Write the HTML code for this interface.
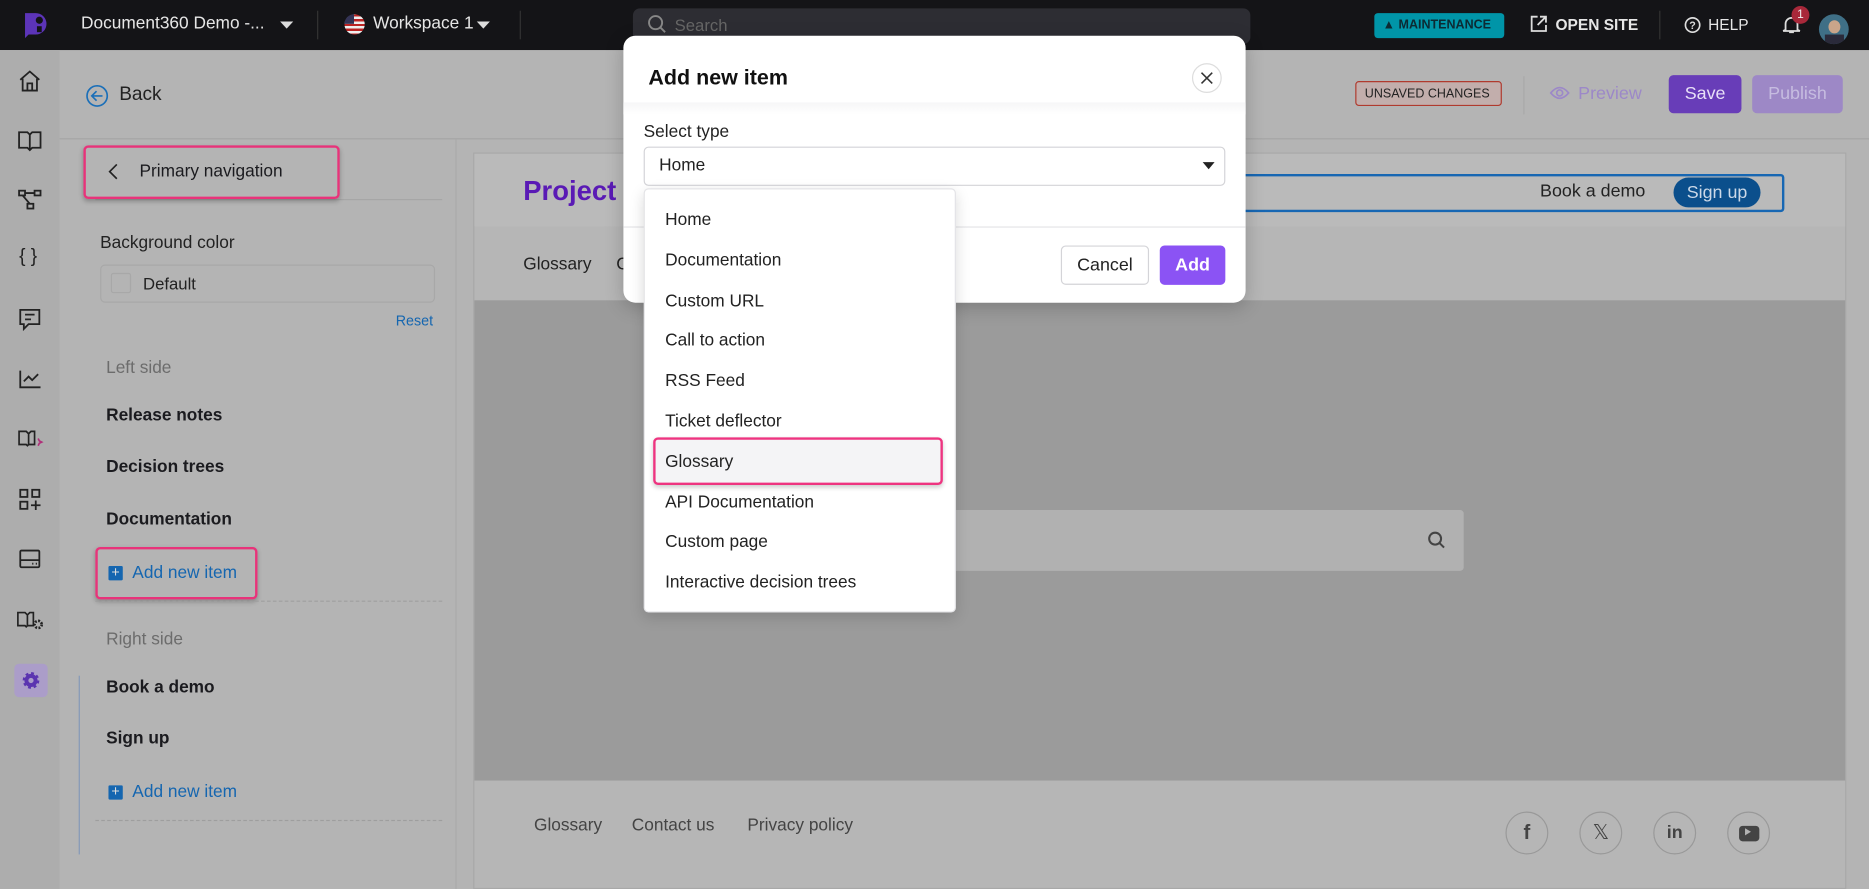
<!DOCTYPE html>
<html><head><meta charset="utf-8">
<style>
*{box-sizing:border-box;margin:0;padding:0}
html,body{width:1869px;height:889px;overflow:hidden;background:#b4b4b4}
#s{position:absolute;left:0;top:0;width:1568px;height:746px;transform:scale(1.19196,1.19169);transform-origin:0 0;font-family:"Liberation Sans",sans-serif;color:#1b1b1f;background:#b4b4b4}
.a{position:absolute}
.t{position:absolute;white-space:nowrap}
svg{position:absolute;overflow:visible}
</style></head><body><div id="s">
<!-- top bar -->
<div class="a" style="left:0;top:0;width:1568px;height:42px;background:#141417"></div>
<svg style="left:18px;top:9px" width="24" height="24" viewBox="0 0 24 24"><path d="M3 2h9a9 9 0 0 1 0 18H6l-3 3z" fill="#5c34b8"/><circle cx="15" cy="8" r="3" fill="#141417"/><path d="M13 13h4v5h-4z" fill="#141417"/></svg>
<div class="t" style="left:68px;top:12px;font-size:14.5px;color:#e6e6e6">Document360 Demo -...</div>
<svg style="left:235px;top:18px" width="11" height="7"><path d="M0 0h11L5.5 6z" fill="#ddd"/></svg>
<div class="a" style="left:266px;top:9px;width:1px;height:24px;background:#333"></div>
<div class="a" style="left:289px;top:12px;width:17px;height:17px;border-radius:50%;background:repeating-linear-gradient(#b22 0 2px,#eee 2px 4px)"><div style="width:8px;height:8px;background:#335;border-radius:8px 0 0 0"></div></div>
<div class="t" style="left:313px;top:12px;font-size:14.5px;color:#e6e6e6">Workspace 1</div>
<svg style="left:400px;top:18px" width="11" height="7"><path d="M0 0h11L5.5 6z" fill="#ddd"/></svg>
<div class="a" style="left:436px;top:9px;width:1px;height:24px;background:#333"></div>
<div class="a" style="left:531px;top:7px;width:518px;height:30px;background:#2d2d33;border-radius:6px"></div>
<svg style="left:543px;top:12px" width="16" height="16"><circle cx="7" cy="7" r="5.5" fill="none" stroke="#888" stroke-width="1.6"/><path d="M11 11l4 4" stroke="#888" stroke-width="1.6"/></svg>
<div class="t" style="left:566px;top:13px;font-size:14px;color:#666">Search</div>
<div class="a" style="left:1153px;top:11px;width:109px;height:21px;background:#0095a8;border-radius:3px"></div>
<div class="t" style="left:1160px;top:15px;font-size:10.5px;font-weight:bold;color:#0c2a33">▲ MAINTENANCE</div>
<svg style="left:1284px;top:13px" width="14" height="14"><path d="M6 1H1v12h12V8M8 1h5v5M13 1L6 8" fill="none" stroke="#ddd" stroke-width="1.5"/></svg>
<div class="t" style="left:1305px;top:13px;font-size:13px;font-weight:bold;color:#e6e6e6">OPEN SITE</div>
<div class="a" style="left:1392px;top:9px;width:1px;height:24px;background:#333"></div>
<svg style="left:1413px;top:14px" width="14" height="14"><circle cx="7" cy="7" r="6" fill="none" stroke="#ddd" stroke-width="1.4"/><text x="7" y="10.5" font-size="9" font-weight="bold" fill="#ddd" text-anchor="middle" font-family="Liberation Sans">?</text></svg>
<div class="t" style="left:1433px;top:13px;font-size:13px;color:#e6e6e6">HELP</div>
<svg style="left:1495px;top:12px" width="16" height="18"><path d="M3 13V8a5 5 0 0 1 10 0v5l2 1H1zM6 15h4" fill="none" stroke="#ddd" stroke-width="1.5"/></svg>
<div class="a" style="left:1503px;top:5px;width:15px;height:15px;border-radius:50%;background:#a8283a;color:#eee;font-size:10px;text-align:center;line-height:15px">1</div>
<div class="a" style="left:1526px;top:12px;width:25px;height:25px;border-radius:50%;background:#3f6f86;overflow:hidden"><div style="margin:5px auto 0;width:10px;height:11px;border-radius:50%;background:#c9a58a"></div><div style="margin:1px auto 0;width:16px;height:8px;background:#2a2a3a"></div></div>
<!-- icon rail -->
<div class="a" style="left:0;top:42px;width:50px;height:704px;background:#adadad"></div>
<svg style="left:15px;top:58px" width="20" height="20" viewBox="0 0 20 20" fill="none" stroke="#222" stroke-width="1.5"><path d="M2 9l8-7 8 7M4 8v10h12V8M8 18v-6h4v6"/></svg>
<svg style="left:15px;top:109px" width="20" height="18" fill="none" stroke="#222" stroke-width="1.5"><path d="M1 2h7l2 2 2-2h7v13h-7l-2 2-2-2H1zM10 4v13"/></svg>
<svg style="left:15px;top:158px" width="20" height="20" fill="none" stroke="#222" stroke-width="1.5"><rect x="1" y="2" width="5" height="4"/><rect x="14" y="2" width="5" height="4"/><rect x="8" y="13" width="5" height="4"/><path d="M6 4h8M4 6l6 7"/></svg>
<div class="t" style="left:16px;top:207px;font-size:16px;color:#222">{ }</div>
<svg style="left:16px;top:259px" width="18" height="20" fill="none" stroke="#222" stroke-width="1.5"><path d="M1 1h16v12H8l-4 4v-4H1zM5 5h8M5 9h5"/></svg>
<svg style="left:16px;top:310px" width="18" height="16" fill="none" stroke="#222" stroke-width="1.5"><path d="M1 1v14h17M4 10l4-4 3 3 5-5"/></svg>
<svg style="left:15px;top:360px" width="22" height="16" fill="none" stroke="#222" stroke-width="1.4"><path d="M1 2h6l2 2 2-2h3v11h-5l-1 1-1-1H1zM9 4v9"/><path d="M17 8l1 2 2 1-2 1-1 2" stroke="#b0307a"/></svg>
<svg style="left:16px;top:410px" width="18" height="18" fill="none" stroke="#222" stroke-width="1.5"><rect x="1" y="1" width="6" height="6"/><rect x="11" y="1" width="6" height="6"/><rect x="1" y="11" width="6" height="6"/><path d="M14 10v8M10 14h8"/></svg>
<svg style="left:16px;top:461px" width="18" height="16" fill="none" stroke="#222" stroke-width="1.5"><rect x="1" y="1" width="16" height="14" rx="1"/><path d="M1 9h16M11 12h1M14 12h1"/></svg>
<svg style="left:14px;top:512px" width="24" height="18" fill="none" stroke="#222" stroke-width="1.4"><path d="M1 2h6l2 2 2-2h3v11H9l-1 1-1-1H1zM9 4v9"/><circle cx="18" cy="12" r="3" fill="none" stroke-width="2.2" stroke-dasharray="1.6 1.2"/></svg>
<div class="a" style="left:12px;top:557px;width:28px;height:28px;border-radius:4px;background:#ab9dc9"></div>
<svg style="left:18px;top:563px" width="16" height="16" viewBox="0 0 16 16"><circle cx="8" cy="8" r="5.5" fill="#5b34b0" stroke="#5b34b0" stroke-width="3" stroke-dasharray="2.2 2.1"/><circle cx="8" cy="8" r="2.2" fill="#ab9dc9"/></svg>
<!-- header row -->
<svg style="left:72px;top:71px" width="19" height="19" fill="none" stroke="#1b6fb8" stroke-width="1.4"><circle cx="9.5" cy="9.5" r="8.5"/><path d="M14 9.5H5M9 5.5l-4 4 4 4"/></svg>
<div class="t" style="left:100px;top:71px;font-size:16px;color:#222">Back</div>
<div class="a" style="left:50px;top:116px;width:1518px;height:1px;background:#a5a5a5"></div>
<div class="a" style="left:1137px;top:68px;width:123px;height:21px;border:1px solid #b03a2e;border-radius:3px;background:#c2aeac"></div>
<div class="t" style="left:1145px;top:73px;font-size:10.5px;color:#222">UNSAVED CHANGES</div>
<div class="a" style="left:1278px;top:64px;width:1px;height:32px;background:#a8a8a8"></div>
<svg style="left:1300px;top:72px" width="17" height="12" fill="none" stroke="#9c88c8" stroke-width="1.4"><path d="M1 6q7.5-9 15 0q-7.5 9-15 0z"/><circle cx="8.5" cy="6" r="2.5"/></svg>
<div class="t" style="left:1324px;top:70px;font-size:15px;color:#9c88c8">Preview</div>
<div class="a" style="left:1400px;top:63px;width:61px;height:32px;background:#683db8;border-radius:4px;color:#e8e0f7;font-size:15px;text-align:center;line-height:32px">Save</div>
<div class="a" style="left:1470px;top:63px;width:76px;height:32px;background:#9d88c6;border-radius:4px;color:#c6bce0;font-size:15px;text-align:center;line-height:32px">Publish</div>
<!-- left panel -->
<div class="a" style="left:50px;top:117px;width:333px;height:629px;background:#b4b4b4;border-right:1px solid #aaa"></div>
<div class="a" style="left:80px;top:167px;width:291px;height:1px;background:#a6a6a6"></div>
<div class="a" style="left:70px;top:122px;width:215px;height:45px;border:2px solid #e8337a;border-radius:4px;box-shadow:0 2px 4px rgba(0,0,0,.25)"></div>
<svg style="left:91px;top:137px" width="8" height="14" fill="none" stroke="#222" stroke-width="1.4"><path d="M7 1L1 7l6 6"/></svg>
<div class="t" style="left:117px;top:136px;font-size:14.5px;color:#1b1b1f">Primary navigation</div>
<div class="t" style="left:84px;top:196px;font-size:14.5px;color:#222">Background color</div>
<div class="a" style="left:84px;top:222px;width:281px;height:32px;border:1px solid #a8a8a8;border-radius:4px"></div>
<div class="a" style="left:93px;top:229px;width:17px;height:17px;border:1px solid #a8a8a8;border-radius:2px"></div>
<div class="t" style="left:120px;top:230px;font-size:14px;color:#222">Default</div>
<div class="t" style="left:332px;top:262px;font-size:12px;color:#1566b0">Reset</div>
<div class="t" style="left:89px;top:301px;font-size:14.5px;color:#6c6c6c">Left side</div>
<div class="t" style="left:89px;top:341px;font-size:14.5px;color:#1b1b1f;font-weight:600">Release notes</div>
<div class="t" style="left:89px;top:384px;font-size:14.5px;color:#1b1b1f;font-weight:600">Decision trees</div>
<div class="t" style="left:89px;top:428px;font-size:14.5px;color:#1b1b1f;font-weight:600">Documentation</div>
<div class="a" style="left:80px;top:459px;width:136px;height:44px;border:2px solid #e8337a;border-radius:4px;box-shadow:0 2px 4px rgba(0,0,0,.25)"></div>
<div class="a" style="left:91px;top:475px;width:12px;height:12px;background:#1566b0;border-radius:1px;color:#ddd;font-size:12px;line-height:11px;text-align:center">+</div>
<div class="t" style="left:111px;top:473px;font-size:14.5px;color:#1566b0">Add new item</div>
<div class="a" style="left:80px;top:504px;width:291px;border-top:1px dashed #9e9e9e"></div>
<div class="t" style="left:89px;top:529px;font-size:14.5px;color:#6c6c6c">Right side</div>
<div class="a" style="left:66px;top:567px;width:1px;height:150px;background:#8399b8"></div>
<div class="t" style="left:89px;top:569px;font-size:14.5px;color:#1b1b1f;font-weight:600">Book a demo</div>
<div class="t" style="left:89px;top:612px;font-size:14.5px;color:#1b1b1f;font-weight:600">Sign up</div>
<div class="a" style="left:91px;top:659px;width:12px;height:12px;background:#1566b0;border-radius:1px;color:#ddd;font-size:12px;line-height:11px;text-align:center">+</div>
<div class="t" style="left:111px;top:657px;font-size:14.5px;color:#1566b0">Add new item</div>
<div class="a" style="left:80px;top:688px;width:291px;border-top:1px dashed #9e9e9e"></div>
<!-- preview card -->
<div class="a" style="left:397px;top:128px;width:1152px;height:618px;border:1px solid #a8a8a8;background:#b6b6b6"></div>
<div class="a" style="left:398px;top:129px;width:1150px;height:61px;background:#bababa"></div>
<div class="t" style="left:439px;top:147px;font-size:23px;font-weight:bold;color:#5a1ab5">Project</div>
<div class="a" style="left:1030px;top:146px;width:467px;height:32px;border:2px solid #1767b3;border-radius:3px"></div>
<div class="t" style="left:1292px;top:152px;font-size:15px;color:#222">Book a demo</div>
<div class="a" style="left:1404px;top:149px;width:73px;height:25px;border-radius:13px;background:#0b4f8c;color:#ccd9e8;font-size:15px;text-align:center;line-height:25px">Sign up</div>
<div class="t" style="left:439px;top:214px;font-size:14.5px;color:#222">Glossary</div>
<div class="t" style="left:517px;top:214px;font-size:14.5px;color:#222">C</div>
<div class="a" style="left:398px;top:252px;width:1150px;height:403px;background:#9b9b9b"></div>
<div class="a" style="left:780px;top:428px;width:448px;height:51px;background:#b1b1b1;border-radius:3px"></div>
<svg style="left:1197px;top:445px" width="16" height="16" fill="none" stroke="#444" stroke-width="1.7"><circle cx="7" cy="7" r="5"/><path d="M10.5 10.5l4 4"/></svg>
<div class="t" style="left:448px;top:685px;font-size:14.5px;color:#444">Glossary</div>
<div class="t" style="left:530px;top:685px;font-size:14.5px;color:#444">Contact us</div>
<div class="t" style="left:627px;top:685px;font-size:14.5px;color:#444">Privacy policy</div>
<div class="a" style="left:1263px;top:681px;width:36px;height:36px;border:1px solid #999;border-radius:50%;color:#444;font-weight:bold;font-size:17px;text-align:center;line-height:34px">f</div>
<div class="a" style="left:1325px;top:681px;width:36px;height:36px;border:1px solid #999;border-radius:50%;color:#444;font-size:17px;text-align:center;line-height:34px">𝕏</div>
<div class="a" style="left:1387px;top:681px;width:36px;height:36px;border:1px solid #999;border-radius:50%;color:#444;font-weight:bold;font-size:15px;text-align:center;line-height:34px">in</div>
<div class="a" style="left:1449px;top:681px;width:36px;height:36px;border:1px solid #999;border-radius:50%"><div style="margin:11px auto 0;width:17px;height:13px;background:#444;border-radius:3px"></div></div>
<svg style="left:1464px;top:695px" width="6" height="6"><path d="M0 0l5 3-5 3z" fill="#b3b3b3"/></svg>
<!-- modal -->
<div class="a" style="left:523px;top:30px;width:522px;height:224px;background:#fff;border-radius:10px;box-shadow:0 4px 16px rgba(0,0,0,.2)"></div>
<div class="a" style="left:523px;top:86px;width:522px;height:10px;background:linear-gradient(#f6f6f7,#fff)"></div>
<div class="t" style="left:544px;top:55px;font-size:18px;font-weight:bold;color:#111">Add new item</div>
<div class="a" style="left:1000px;top:53px;width:25px;height:25px;border:1px solid #ddd;border-radius:50%"></div>
<svg style="left:1008px;top:61px" width="9" height="9" stroke="#333" stroke-width="1.3"><path d="M0 0l9 9M9 0L0 9"/></svg>
<div class="t" style="left:540px;top:103px;font-size:14.5px;color:#222">Select type</div>
<div class="a" style="left:540px;top:123px;width:488px;height:33px;border:1px solid #d4d4d8;border-radius:4px"></div>
<div class="t" style="left:553px;top:131px;font-size:14.5px;color:#222">Home</div>
<svg style="left:1009px;top:136px" width="10" height="6"><path d="M0 0h10L5 6z" fill="#222"/></svg>
<div class="a" style="left:523px;top:190px;width:522px;height:1px;background:#e4e4e7"></div>
<div class="a" style="left:890px;top:206px;width:74px;height:33px;border:1px solid #d4d4d8;border-radius:4px;font-size:15px;text-align:center;line-height:31px;color:#222">Cancel</div>
<div class="a" style="left:973px;top:206px;width:55px;height:33px;background:#8b53f4;border-radius:4px;font-size:15px;text-align:center;line-height:33px;color:#fff;font-weight:bold">Add</div>
<!-- dropdown -->
<div class="a" style="left:540px;top:158px;width:262px;height:356px;background:#fff;border:1px solid #e4e4e7;border-radius:4px;box-shadow:0 4px 12px rgba(0,0,0,.15)"></div>
<div class="a" style="left:548px;top:367px;width:243px;height:40px;background:#f4f4f6;border:2px solid #ee3480;border-radius:4px;box-shadow:0 2px 4px rgba(0,0,0,.2)"></div>
<div style="position:absolute;left:558px;top:169px;font-size:14.5px;color:#222;line-height:33.8px;white-space:nowrap">Home<br>Documentation<br>Custom URL<br>Call to action<br>RSS Feed<br>Ticket deflector<br>Glossary<br>API Documentation<br>Custom page<br>Interactive decision trees</div>
</div></body></html>
